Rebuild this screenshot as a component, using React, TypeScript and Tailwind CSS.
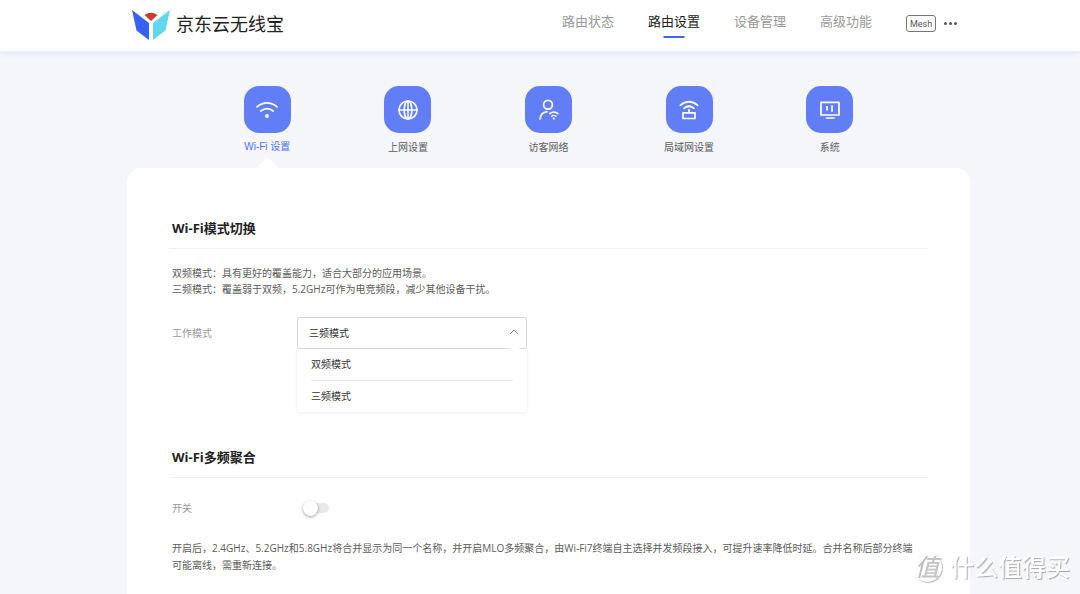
import { useState } from "react";
import type { ReactNode } from "react";

const navItems = ["路由状态", "路由设置", "设备管理", "高级功能"];
const modes = ["双频模式", "三频模式"];

function Logo() {
  return (
    <svg width="38" height="32" viewBox="0 -2 38 32" aria-hidden="true">
      <path d="M0 0 L17 13 V30 L4.5 20.500 Z" fill="#3760f4" />
      <path d="M38 0 L21 13 V30 L33.5 20.500 Z" fill="#5fd8ee" />
      <path d="M12.5 5 Q19 0.500 25.500 5 L19 11 Z" fill="#d03a2c" />
    </svg>
  );
}

function Icon({ children }: { children: ReactNode }) {
  return (
    <svg
      width="24"
      height="24"
      viewBox="0 0 24 24"
      fill="none"
      stroke="white"
      strokeWidth="1.7"
      strokeLinecap="round"
      aria-hidden="true"
    >
      {children}
    </svg>
  );
}

const tabs: { label: string; icon: ReactNode }[] = [
  {
    label: "Wi-Fi 设置",
    icon: (
      <Icon>
        <path d="M2 8.900 Q12 1 22 8.900" />
        <path d="M5.800 13 Q12 8.200 18.200 13" />
        <circle cx="12" cy="18" r="1.900" fill="white" stroke="none" />
      </Icon>
    ),
  },
  {
    label: "上网设置",
    icon: (
      <Icon>
        <circle cx="12" cy="12" r="9" />
        <ellipse cx="12" cy="12" rx="3.800" ry="9" />
        <path d="M3 12 H21 M12 3 V21" strokeWidth="1.500" />
      </Icon>
    ),
  },
  {
    label: "访客网络",
    icon: (
      <Icon>
        <circle cx="12" cy="6.800" r="4.400" />
        <path d="M4.200 21 Q4.500 14.500 11 13.600" />
        <path d="M13.600 15.600 Q17.800 12.200 22 15.600" strokeWidth="1.500" />
        <path d="M15.600 18.200 Q17.800 16.400 20 18.200" strokeWidth="1.300" />
        <circle cx="17.800" cy="20.600" r="1.100" fill="white" stroke="none" />
      </Icon>
    ),
  },
  {
    label: "局域网设置",
    icon: (
      <Icon>
        <path d="M3.300 7.300 Q12 0.200 20.700 7.300" />
        <path d="M7 10.300 Q12 6.200 17 10.300" />
        <path d="M12 11.500 V14.500" />
        <rect x="6" y="14.800" width="12" height="5.700" strokeLinejoin="round" />
      </Icon>
    ),
  },
  {
    label: "系统",
    icon: (
      <Icon>
        <rect x="3" y="4.300" width="18" height="12.700" strokeLinejoin="round" />
        <path d="M9 8 V12.500 M14 7.300 V13.700" strokeLinecap="butt" />
        <path d="M8.500 20 H16" />
      </Icon>
    ),
  },
];

function SectionTitle({ children }: { children: ReactNode }) {
  return (
    <h2 className="border-b border-[#f0f0f0] pb-2.5 pl-[3px] text-[13px] leading-5 font-bold text-[#222]">
      {children}
    </h2>
  );
}

export default function App() {
  const [mode, setMode] = useState("三频模式");
  const [merged, setMerged] = useState(false);

  return (
    <div className="flex h-screen flex-col overflow-hidden bg-[#f4f6fa] font-['Open_Sans','Noto_Sans_CJK_SC',sans-serif] text-[10px] text-[#5c5c5c]">
      <header className="bg-white pl-[17px] shadow-[0_2px_8px_#dfe5f5]">
        <div className="mx-auto flex h-[51px] max-w-[843px] items-center justify-between pr-[13px] pb-1 pl-[5px]">
          <a href="#home" className="flex items-center gap-1.5 text-[18px] leading-7 text-[#222]">
            <Logo />
            京东云无线宝
          </a>
          <div className="flex items-center">
            <nav className="flex gap-[34px] text-[13px] leading-5 text-[#999]">
              {navItems.map((item) =>
                item === "路由设置" ? (
                  <a key={item} href="#settings" aria-current="page" className="relative pb-1.5 text-[#222]">
                    {item}
                    <span className="absolute -bottom-px left-1/2 h-0.5 w-[21px] -translate-x-1/2 bg-[#3f63f5]" />
                  </a>
                ) : (
                  <a key={item} href="#nav" className="pb-1.5">
                    {item}
                  </a>
                ),
              )}
            </nav>
            <button
              type="button"
              className="ml-[34px] h-[17px] w-[30px] rounded-[3px] border border-[#777] font-['Roboto',sans-serif] text-[9px] leading-[14px] text-[#555]"
            >
              Mesh
            </button>
            <button type="button" aria-label="更多" className="ml-2 flex gap-0.5 py-2">
              <span className="size-[3px] rounded-full bg-[#555]" />
              <span className="size-[3px] rounded-full bg-[#555]" />
              <span className="size-[3px] rounded-full bg-[#555]" />
            </button>
          </div>
        </div>
      </header>

      <main className="flex flex-1 flex-col pl-[17px]">
        <div className="mx-auto flex w-full max-w-[843px] flex-1 flex-col">
          <nav className="grid grid-cols-5 px-[70px] pt-[35px]">
            {tabs.map((tab, index) => (
              <a key={tab.label} href="#tab" className="flex flex-col items-center">
                <span className="flex size-[47px] items-center justify-center rounded-[15px] bg-[#617ef6]">
                  {tab.icon}
                </span>
                <span
                  className={
                    index === 0
                      ? "mt-1.5 font-['Liberation_Sans','Noto_Sans_CJK_SC',sans-serif] leading-4 text-[#4f6ff5]"
                      : "mt-1.5 leading-4"
                  }
                >
                  {tab.label}
                </span>
                <span
                  className={
                    index === 0
                      ? "mt-0.5 h-[11px] w-[22px] bg-white [clip-path:polygon(50%_0,100%_100%,0_100%)]"
                      : "mt-0.5 h-[11px]"
                  }
                />
              </a>
            ))}
          </nav>

          <div className="flex-1 rounded-t-[14px] bg-white px-[42px] pt-[50px]">
            <section>
              <SectionTitle>Wi-Fi模式切换</SectionTitle>
              <p className="mt-4 pl-[3px] leading-4">
                双频模式：具有更好的覆盖能力，适合大部分的应用场景。
                <br />
                三频模式：覆盖弱于双频，5.2GHz可作为电竞频段，减少其他设备干扰。
              </p>
              <div className="mt-5 flex items-center pl-[3px]">
                <label htmlFor="mode" className="w-[125px] text-[#999]">
                  工作模式
                </label>
                <div className="relative w-[230px]">
                  <select
                    id="mode"
                    value={mode}
                    onChange={(event) => setMode(event.target.value)}
                    className="block h-8 w-full appearance-none rounded-xs border border-[#d4d5d9] bg-white px-[11px] text-[#333] outline-none"
                  >
                    {modes.map((item) => (
                      <option key={item}>{item}</option>
                    ))}
                  </select>
                  <svg
                    className="pointer-events-none absolute top-3 right-2"
                    width="10"
                    height="6"
                    viewBox="0 0 10 6"
                    fill="none"
                    stroke="#999"
                    aria-hidden="true"
                  >
                    <path d="M1 5 L5 1 L9 5" />
                  </svg>
                  <ul className="absolute top-8 left-0 w-full bg-white px-3.5 text-[#333] shadow-[0_1px_4px_#eceffc]">
                    <li className="absolute -top-1 right-[7px] h-1 w-2.5 bg-white [clip-path:polygon(30%_0,70%_0,100%_100%,0_100%)]" />
                    {modes.map((item) => (
                      <li key={item} className="border-b border-[#e4e4e4] last:border-0">
                        <button type="button" onClick={() => setMode(item)} className="h-[31px] w-full text-left">
                          {item}
                        </button>
                      </li>
                    ))}
                  </ul>
                </div>
              </div>
            </section>

            <section className="mt-[98px]">
              <SectionTitle>Wi-Fi多频聚合</SectionTitle>
              <div className="mt-[22px] flex items-center pl-[3px] leading-4">
                <label htmlFor="merge" className="w-[131px] text-[#999]">
                  开关
                </label>
                <span className="relative flex h-4 w-[26px] items-center">
                  <input
                    id="merge"
                    type="checkbox"
                    role="switch"
                    checked={merged}
                    onChange={() => setMerged(!merged)}
                    className="peer h-2.5 w-full appearance-none rounded-full bg-[#e9e9e9] checked:bg-[#617ef6]"
                  />
                  <span className="pointer-events-none absolute left-0 size-[15px] rounded-full bg-white shadow-[0_1px_3px_#0006] peer-checked:left-[11px]" />
                </span>
              </div>
              <p className="mt-6 pr-3 pl-[3px] leading-[17px]">
                开启后，2.4GHz、5.2GHz和5.8GHz将合并显示为同一个名称，并开启MLO多频聚合，由Wi-Fi7终端自主选择并发频段接入，可提升速率降低时延。合并名称后部分终端可能离线，需重新连接。
              </p>
            </section>
          </div>
        </div>
      </main>

      <div className="pointer-events-none fixed right-2.5 bottom-[9px] flex items-center gap-2 text-[24px] leading-9 font-medium text-white [text-shadow:1px_1px_1px_#aaa]">
        <span className="flex size-[30px] items-center justify-center rounded-full bg-white text-[#c4c4c4] italic shadow-[1px_1px_1px_#bbb] [text-shadow:none]">
          值
        </span>
        <span>什么值得买</span>
      </div>
    </div>
  );
}
